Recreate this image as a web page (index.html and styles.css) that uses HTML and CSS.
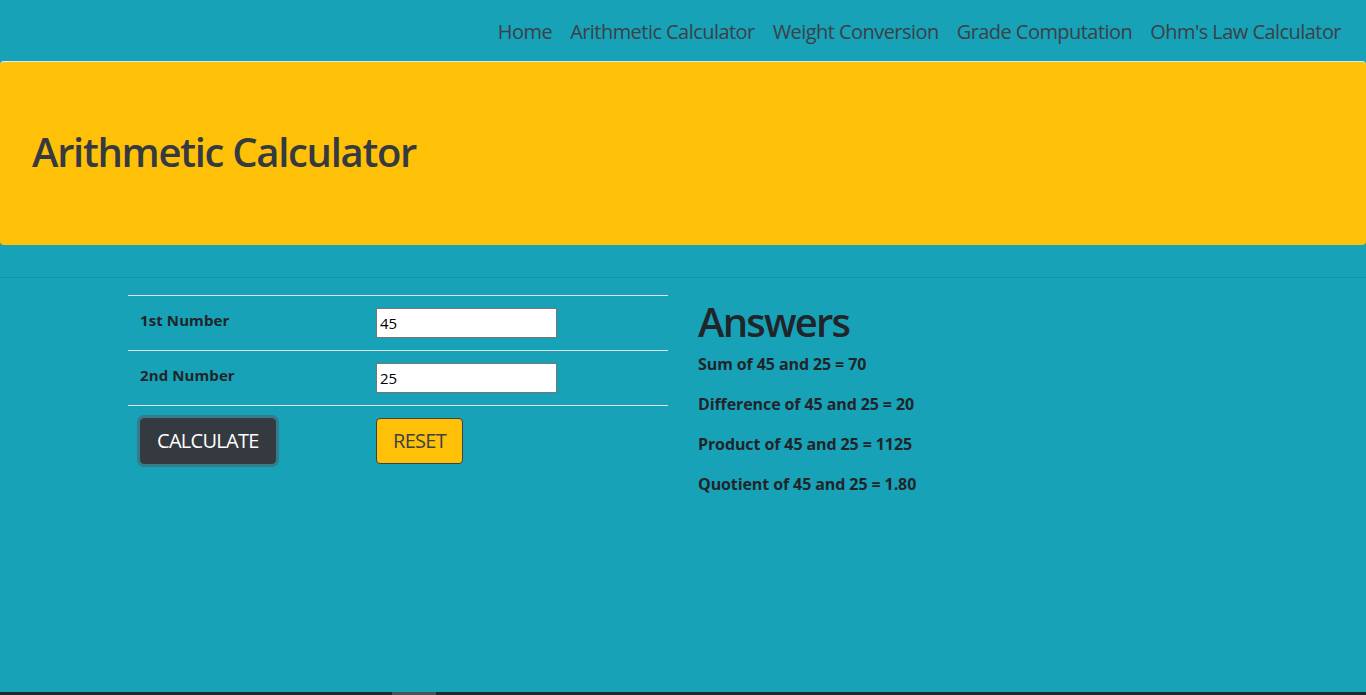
FILE: index.html
```html
<!DOCTYPE html>
<html lang="en">
<head>
<meta charset="utf-8">
<title>Arithmetic Calculator</title>
<link rel="stylesheet" href="styles.css">
</head>
<body>
<nav class="navbar">
  <ul class="nav">
    <li><a class="nav-link" href="#">Home</a></li>
    <li><a class="nav-link" href="#">Arithmetic Calculator</a></li>
    <li><a class="nav-link" href="#">Weight Conversion</a></li>
    <li><a class="nav-link" href="#">Grade Computation</a></li>
    <li><a class="nav-link" href="#">Ohm's Law Calculator</a></li>
  </ul>
</nav>
<header class="jumbotron">
  <h1 class="title">Arithmetic Calculator</h1>
</header>
<hr class="divider">
<main class="container">
  <section class="col">
    <table class="calc-table">
      <tr>
        <td class="label-cell">1st Number</td>
        <td><input class="num-input" type="text" value="45"></td>
      </tr>
      <tr>
        <td class="label-cell">2nd Number</td>
        <td><input class="num-input" type="text" value="25"></td>
      </tr>
      <tr class="btn-row">
        <td><button class="btn btn-dark">CALCULATE</button></td>
        <td><button class="btn btn-warning">RESET</button></td>
      </tr>
    </table>
  </section>
  <section class="col answers">
    <h1 class="answers-title">Answers</h1>
    <p class="answer">Sum of 45 and 25 = 70</p>
    <p class="answer">Difference of 45 and 25 = 20</p>
    <p class="answer">Product of 45 and 25 = 1125</p>
    <p class="answer">Quotient of 45 and 25 = 1.80</p>
  </section>
</main>
<div class="scrollbar"><span class="thumb"></span></div>
</body>
</html>
```
FILE: styles.css
```css
* { box-sizing: border-box; }
html, body { margin: 0; padding: 0; }
body {
  background: #17a2b8;
  font-family: "Open Sans", "Noto Sans", sans-serif;
  color: #212529;
  font-size: 16px;
  line-height: 1.5;
  min-height: 695px;
}
.navbar {
  height: 61px;
  display: flex;
  justify-content: flex-end;
  align-items: center;
  padding: 2px 16px 0;
}
.nav {
  list-style: none;
  margin: 0;
  padding: 0;
  display: flex;
}
.nav-link {
  display: block;
  padding: 8px 9px;
  color: #3b4146;
  text-decoration: none;
  font-size: 20px;
  letter-spacing: -0.55px;
}
.jumbotron {
  background: #ffc107;
  border-top: 1px solid #d9eef2;
  border-radius: 4px;
  padding: 66px 32px 61px;
  margin: 0 0 32px;
  height: 184px;
}
.title {
  margin: 0;
  font-size: 40px;
  font-weight: 600;
  line-height: 48px;
  color: #343a40;
  letter-spacing: -1.3px;
}
.divider {
  margin: 0 0 17px;
  border: 0;
  border-top: 1px solid rgba(0,0,0,0.1);
}
.container {
  width: 1140px;
  margin: 0 auto;
  display: flex;
}
.col {
  width: 570px;
  padding: 0 15px;
}
.calc-table {
  width: 100%;
  border-collapse: collapse;
}
.calc-table td {
  padding: 12px;
  border-top: 1px solid #dee2e6;
  vertical-align: top;
}
.calc-table td:first-child { width: 236px; }
.label-cell {
  font-weight: 700;
  font-size: 15px;
  letter-spacing: 0.1px;
  padding-top: 13px !important;
}
.num-input {
  width: 181px;
  height: 30px;
  border: 1px solid #767676;
  padding: 1px 3px;
  font-family: "Open Sans", sans-serif;
  font-size: 15px;
  color: #000;
  background: #fff;
}
.btn-row td { padding-top: 12px; }
.btn {
  font-family: "Open Sans", sans-serif;
  font-size: 20px;
  line-height: 28px;
  padding: 8px 16px;
  border-radius: 4px;
  letter-spacing: -0.7px;
}
.btn-dark {
  background: #343a40;
  color: #fff;
  border: 1px solid #343a40;
  box-shadow: 0 0 0 3px rgba(82,88,93,0.5);
}
.btn-warning {
  background: #ffc107;
  color: #3b4146;
  border: 1px solid #3b4146;
}
.answers { padding-left: 15px; }
.answers-title {
  margin: 3px 0 6px;
  font-size: 40px;
  font-weight: 600;
  line-height: 48px;
  color: #212529;
  letter-spacing: -1.8px;
}
.answer {
  margin: 0 0 16px;
  font-weight: 700;
  font-size: 16px;
  line-height: 24px;
  letter-spacing: -0.1px;
}
.scrollbar {
  position: fixed;
  left: 0;
  right: 0;
  bottom: 0;
  height: 3px;
  background: #1c2a2e;
}
.thumb {
  position: absolute;
  left: 392px;
  width: 44px;
  top: 0;
  bottom: 0;
  background: #4a5356;
}
```
